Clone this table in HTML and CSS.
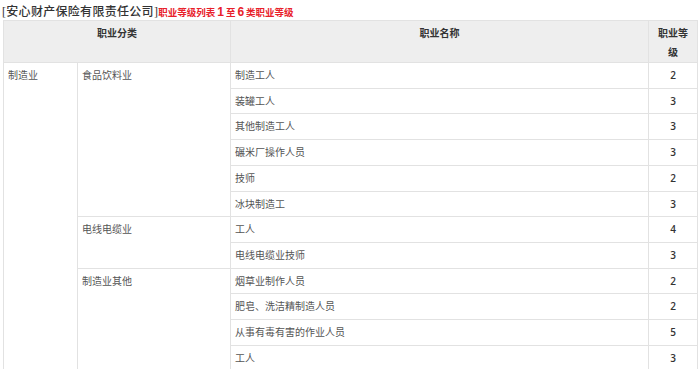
FILE: index.html
```html
<!DOCTYPE html>
<html lang="zh-CN">
<head>
<meta charset="utf-8">
<title>职业等级列表</title>
<link rel="stylesheet" href="styles.css">
</head>
<body>
<div class="page">
  <h1 class="title"><span class="company">[安心财产保险有限责任公司]</span><span class="subtitle">职业等级列表<b class="num">1</b>至<b class="num">6</b>类职业等级</span></h1>
  <table class="grade-table">
    <colgroup>
      <col class="c1"><col class="c2"><col class="c3"><col class="c4">
    </colgroup>
    <thead>
      <tr>
        <th colspan="2">职业分类</th>
        <th>职业名称</th>
        <th class="grade">职业等级</th>
      </tr>
    </thead>
    <tbody>
      <tr><td rowspan="12">制造业</td><td rowspan="6">食品饮料业</td><td>制造工人</td><td class="grade">2</td></tr>
      <tr><td>装罐工人</td><td class="grade">3</td></tr>
      <tr><td>其他制造工人</td><td class="grade">3</td></tr>
      <tr><td>碾米厂操作人员</td><td class="grade">3</td></tr>
      <tr><td>技师</td><td class="grade">2</td></tr>
      <tr><td>冰块制造工</td><td class="grade">3</td></tr>
      <tr><td rowspan="2">电线电缆业</td><td>工人</td><td class="grade">4</td></tr>
      <tr><td>电线电缆业技师</td><td class="grade">3</td></tr>
      <tr><td rowspan="4">制造业其他</td><td>烟草业制作人员</td><td class="grade">2</td></tr>
      <tr><td>肥皂、洗洁精制造人员</td><td class="grade">2</td></tr>
      <tr><td>从事有毒有害的作业人员</td><td class="grade">5</td></tr>
      <tr><td>工人</td><td class="grade">3</td></tr>
    </tbody>
  </table>
</div>
</body>
</html>
```
FILE: styles.css
```css
html, body {
  margin: 0;
  padding: 0;
  background: #ffffff;
}
body {
  font-family: "Noto Sans CJK SC", "Noto Sans", sans-serif;
  color: #555555;
}
.page {
  padding: 2px 3px 0 2px;
}
.title {
  margin: 0;
  height: 18px;
  line-height: 18px;
  font-size: 12px;
  font-weight: normal;
  white-space: nowrap;
}
.company {
  color: #333333;
  font-family: "Liberation Serif", "Noto Sans CJK SC", serif;
  font-weight: 500;
  font-size: 12px;
  letter-spacing: 0.3px;
}
.subtitle {
  color: #e8202a;
  font-weight: bold;
  font-size: 9.5px;
}
.subtitle .num {
  font-family: "Liberation Sans", sans-serif;
  font-size: 12px;
  margin: 0 2px;
}
.grade-table {
  width: 694px;
  margin-left: 1px;
  border-collapse: collapse;
  table-layout: fixed;
  font-size: 10px;
}
.c1 { width: 74px; }
.c2 { width: 153px; }
.c3 { width: 418px; }
.c4 { width: 49px; }
.grade-table th,
.grade-table td {
  border: 1px solid #e2e2e2;
  vertical-align: top;
  text-align: left;
}
.grade-table th {
  background: #eeeeee;
  color: #333333;
  font-weight: bold;
  text-align: center;
  padding: 3px 6px 1px;
  line-height: 18.5px;
  height: 37px;
}
.grade-table th.grade {
  padding: 3px 7px 1px;
}
.grade-table td {
  padding: 5px 4px 5px 4px;
  line-height: 14.7px;
  color: #555555;
}
.grade-table td.grade {
  text-align: center;
  color: #333333;
  font-family: "Open Sans", "Noto Sans", sans-serif;
  font-weight: 600;
}
```
